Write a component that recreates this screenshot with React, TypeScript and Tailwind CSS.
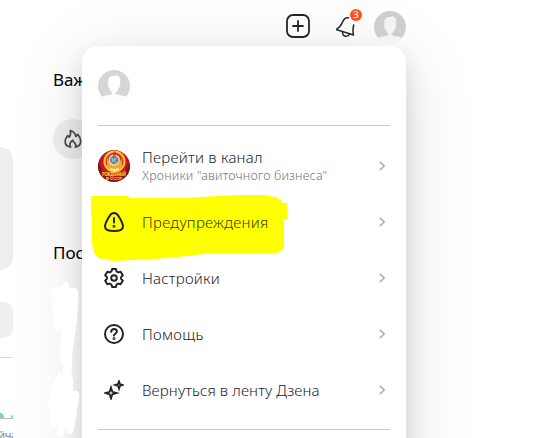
import { SVGProps } from "react";

type IconProps = SVGProps<SVGSVGElement>;

type MenuItem = {
  name: string;
  note?: string;
  icon: (props: IconProps) => React.JSX.Element;
  iconClass: string;
  nameClass: string;
};

const stroke = {
  fill: "none",
  stroke: "currentColor",
  strokeWidth: 2,
  strokeLinecap: "round",
  strokeLinejoin: "round",
} as const;

function ChannelLogo(props: IconProps) {
  return (
    <svg viewBox="0 0 32 32" {...props}>
      <defs>
        <radialGradient id="flag" cx="50%" cy="38%" r="62%">
          <stop offset="0" stopColor="#e8432b" />
          <stop offset="0.6" stopColor="#c81c1c" />
          <stop offset="1" stopColor="#7d1115" />
        </radialGradient>
        <clipPath id="round">
          <circle cx="16" cy="16" r="16" />
        </clipPath>
      </defs>
      <g clipPath="url(#round)">
        <rect width="32" height="32" fill="url(#flag)" />
        <path d="M0 13Q5 19 3 32H0ZM32 13Q27 19 29 32H32Z" fill="#7a1518" />
        <circle cx="16.5" cy="11.5" r="10" fill="#e5301f" stroke="#f6c83d" strokeWidth="2" />
        <path d="M9 8a8 8 0 0 0 15 0v9q-7.500 6-15 0Z" fill="#f3a72c" />
        <circle cx="16.2" cy="10" r="5.700" fill="#ecdfc0" />
        <circle cx="16.2" cy="10" r="4.300" fill="#5e8793" />
        <path d="m13.5 8 5 5m0-5-5 4" stroke="#d8d9c4" strokeWidth="1" />
        <path d="m16.500 1 .8 1.700 1.800.2-1.300 1.200.3 1.800-1.600-.9-1.600.9.3-1.800L14 2.900l1.800-.2Z" fill="#e31c17" />
        <path d="M12 18.500q4.500 3 9 0" stroke="#fff0a0" strokeWidth="2" fill="none" />
        <g
          fill="#ffe338"
          textAnchor="middle"
          fontFamily="'Liberation Sans', sans-serif"
          fontWeight="700"
        >
          <text x="16" y="26" fontSize="4.600" textLength="23.500" lengthAdjust="spacingAndGlyphs">
            РОЖДЁННЫЙ
          </text>
          <text x="16" y="30.200" fontSize="4.400" textLength="16" lengthAdjust="spacingAndGlyphs">
            В СССР
          </text>
        </g>
      </g>
    </svg>
  );
}

function WarningIcon(props: IconProps) {
  return (
    <svg viewBox="0 0 20 20" {...stroke} {...props}>
      <path d="M10 1C7.800 1 6.300 2.500 4.900 4.900 2.900 8.200 1 11.800 1 14.500 1 18 3.700 19 10 19s9-1 9-4.500c0-2.700-1.900-6.300-3.900-9.600C13.700 2.500 12.200 1 10 1Z" />
      <path d="M10 6v4.600" />
      <circle cx="10" cy="14.300" r=".5" />
    </svg>
  );
}

function GearIcon(props: IconProps) {
  return (
    <svg viewBox="0 0 20 20" {...stroke} {...props}>
      <path d="M8.100 1h3.800l.7 2.500 1.600.9 2.400-.7 2.200 3.600-1.700 1.800v1.800l1.700 1.800-2.200 3.600-2.400-.7-1.600.9-.7 2.500H8.100l-.7-2.500-1.600-.9-2.400.7-2.200-3.600 1.700-1.800V9.100L1.200 7.300l2.200-3.600 2.400.7 1.600-.9Z" />
      <circle cx="10" cy="10" r="2.800" />
    </svg>
  );
}

function HelpIcon(props: IconProps) {
  return (
    <svg viewBox="0 0 20 20" {...stroke} {...props}>
      <circle cx="10" cy="10" r="9" />
      <path d="M7.200 7.800C7.400 6 8.500 5.100 10 5.100c1.700 0 2.900 1 2.900 2.500 0 2.200-2.900 2.100-2.900 4" />
      <circle cx="10" cy="14.600" r=".5" />
    </svg>
  );
}

function StarsIcon(props: IconProps) {
  return (
    <svg viewBox="0 0 20 20" {...stroke} strokeLinejoin="miter" strokeWidth={1.8} {...props}>
      <path d="M7 7.500 8.300 11.800 12.600 13 8.300 14.300 7 18.500 5.700 14.300 1.200 13 5.700 11.800Z" />
      <path d="m15 1.200.9 2.900 2.900.9-2.900.9L15 8.800l-.9-2.900-2.900-.9 2.900-.9Z" />
    </svg>
  );
}

function ChevronIcon(props: IconProps) {
  return (
    <svg viewBox="0 0 6 10" fill="none" stroke="currentColor" strokeWidth="1.600" {...props}>
      <path d="m.8.7 4.300 4.300L.8 9.300" />
    </svg>
  );
}

function Avatar(props: IconProps) {
  return (
    <svg viewBox="0 0 32 32" {...props}>
      <clipPath id="face">
        <circle cx="16" cy="16" r="16" />
      </clipPath>
      <circle cx="16" cy="16" r="16" fill="currentColor" />
      <path
        clipPath="url(#face)"
        fill="#fff"
        fillOpacity="var(--face, 1)"
        d="M10.300 13.500C9.800 9.500 11 6.500 14 6c2-.2 3.500-.1 5-1 .3 1 1 1.200 2 1.500 1.600 1.500 1.500 4.300 1 7 .3 2-.4 3.500-1.200 4.200C20 20 19 21.500 18 22.500v1.500c2.500 1.500 6 1 9.500 2.500l1 6H3.500l1-6c3-1.500 6.800-.8 9.500-2.200v-1.800c-1.300-1.200-2.200-2.700-2.700-4.800-1-.7-1.300-2.200-1-4.200Z"
      />
      <path d="m14 23.300 3 1 1.200-1.500-1.400.7Z" fill="currentColor" />
    </svg>
  );
}

const menu: MenuItem[] = [
  {
    name: "Перейти в канал",
    note: 'Хроники "авиточного бизнеса"',
    icon: ChannelLogo,
    iconClass: "size-8",
    nameClass: "mb-0.5 tracking-[0.25px]",
  },
  {
    name: "Предупреждения",
    icon: WarningIcon,
    iconClass: "size-5",
    nameClass: "tracking-[0.27px] text-[#39390b]",
  },
  { name: "Настройки", icon: GearIcon, iconClass: "size-5", nameClass: "tracking-[0.22px]" },
  { name: "Помощь", icon: HelpIcon, iconClass: "size-5", nameClass: "tracking-[0.3px]" },
  {
    name: "Вернуться в ленту Дзена",
    icon: StarsIcon,
    iconClass: "size-5",
    nameClass: "tracking-[0.14px]",
  },
];

function LeftColumn() {
  return (
    <div className="flex h-full w-[13px] shrink-0 flex-col overflow-hidden pt-[147px]">
      <div className="h-[123px] shrink-0 rounded-r-2xl bg-[#edeef0]" />
      <div className="mt-8 h-9 shrink-0 rounded-r-[10px] bg-[#efefef]" />
      <div className="mt-[19px] h-px shrink-0 bg-[#d9d9d9]" />
      <svg className="mt-[54px] h-[7px] w-[13px] shrink-0" viewBox="0 0 13 7">
        <path d="M0 6V1h1.500Q4 2 4 6ZM11 6q0-3 2-3.500V6Z" fill="#7ed9a0" />
        <path d="M0 6.500h13" stroke="#bdbdbd" />
      </svg>
      <span className="mt-[7px] -ml-[2px] text-[11.5px] leading-[18px] tracking-[-0.5px] whitespace-nowrap text-[#8b8b8b]">
        йча
      </span>
    </div>
  );
}

function Feed() {
  return (
    <div className="flex flex-col pt-[68px] pl-10">
      <h2 className="text-[17px] leading-6 font-[450]">Важное</h2>
      <div className="mt-[27px] flex size-10 items-center justify-center rounded-full bg-[#efefef]">
        <svg className="size-5 text-[#4d4d4d]" viewBox="0 0 20 20" {...stroke} strokeWidth={1.7}>
          <path d="M7.500 18C4 17.500 2 15 2.200 12 2.400 9.500 3.500 8 4.700 6.600l1.500 1.500C7.800 6.500 7.800 4 7.300 1.500c3 1 5 3 5.700 6l1.700-2.200c1.900 2 3 4.200 3 6.700 0 3.200-2 5.500-5.200 6" />
          <path d="M7.500 18c-1.600-2.700-.3-5 2.300-6.800.3 1.300 1 2 1.900 2.700 1.200 1.200 1.400 2.600.8 4.100" />
        </svg>
      </div>
      <h2 className="mt-[82px] text-[17px] leading-6 font-[450]">Последние</h2>
    </div>
  );
}

function Header() {
  return (
    <div className="absolute top-3 left-[286px] flex h-8 items-center text-[#23232b]">
      <svg className="-mt-1 size-6" viewBox="0 0 24 24" {...stroke} strokeWidth={1.8}>
        <rect x="1" y="1" width="22" height="22" rx="6" />
        <path d="M12 7v10M7 12h10" />
      </svg>
      <div className="relative ml-[26px] size-6">
        <svg className="size-6" viewBox="0 0 24 24" {...stroke} strokeWidth={1.5}>
          <path d="M12.500 1.800C9.500 1.500 7.500 3.300 6.300 6.500 5 10 3.500 11.500 0 13.500l17.500 5.500c-1-3.500-.6-6.500.2-10" />
          <path d="M6.500 16.200c0 2.500 1.500 4 3.600 4 1.600 0 2.800-.6 3.400-2" />
        </svg>
        <span className="absolute -top-[7px] left-[14px] flex size-3 items-center justify-center rounded-full bg-[#ff5317] text-[9.5px] font-medium text-white">
          3
        </span>
      </div>
      <Avatar className="ml-[14px] size-8 -mt-0.5 text-[#cecece] [--face:0.75]" />
    </div>
  );
}

export default function App() {
  return (
    <div className="relative flex h-[438px] w-[545px] overflow-hidden bg-white font-['Noto_Sans','Open_Sans',sans-serif] text-black">
      <LeftColumn />
      <Feed />

      {/* account menu */}
      <div className="absolute top-[46px] left-[82px] h-[520px] w-[324px] rounded-2xl bg-white px-4 pt-6 shadow-[0_12px_24px_rgba(0,0,0,0.12),0_12px_72px_rgba(0,0,0,0.12)]">
        <svg className="absolute top-[149px] left-[9px] h-[67px] w-[197px]" viewBox="91 195 197 67">
          <path
            fill="#ffff00"
            d="M91 196H128L130 198H185L218 196 235 195H265L275 197 281 200 282 203H287V219H280L284 221V247L282 251 277 253H258L228 254 213 253 178 257 155 259 135 260 113 261 98 258 94 253 92 243V215H91Z"
          />
          <path d="M100 236v4" stroke="#fff" strokeWidth=".7" />
        </svg>
        <Avatar className="size-8 text-[#d6d6d6]" />
        <div className="mt-[23px] mb-3 h-px bg-[#c9c9c9]" />
        {menu.map((item) => (
          <div key={item.name} className="relative flex h-14 items-center text-[#22222b]">
            <div className="flex w-8 justify-center">
              <item.icon className={item.iconClass} />
            </div>
            <div className="ml-3 flex-1 whitespace-nowrap">
              <div className={`text-[15px] leading-[18px] font-light ${item.nameClass}`}>
                {item.name}
              </div>
              {item.note && (
                <div className="text-[12.5px] leading-4 font-light tracking-[0.18px] text-[#777]">
                  {item.note}
                </div>
              )}
            </div>
            <ChevronIcon className="mr-[5px] h-[10px] w-[6px] text-[#adadad]" />
          </div>
        ))}
        <div className="mt-[11px] h-px bg-[#c9c9c9]" />
      </div>

      {/* painted over part of the feed */}
      <svg className="absolute top-[280px] left-[47px] h-[158px] w-[35px]" viewBox="47 280 35 158">
        <path
          fill="#fff"
          d="M51 290Q51 287 54 287L62 287Q63 282 66 282T69 288H74Q78 288 78 292L78.500 300 77 320 72 357V370L71 373 73 380V391Q79 390 79.300 396L74 430Q73 434 69 434 66 433 65 428L64 434Q63 437 60 437T57 433V427Q50 427 50 422L50.700 409Q48 408 48 404 51 390 55 379 57 373 63 372V368Q59 357 59 353 60 340 62 330 59 334 57 333 54 331 53 322Z"
        />
      </svg>

      <Header />
    </div>
  );
}
